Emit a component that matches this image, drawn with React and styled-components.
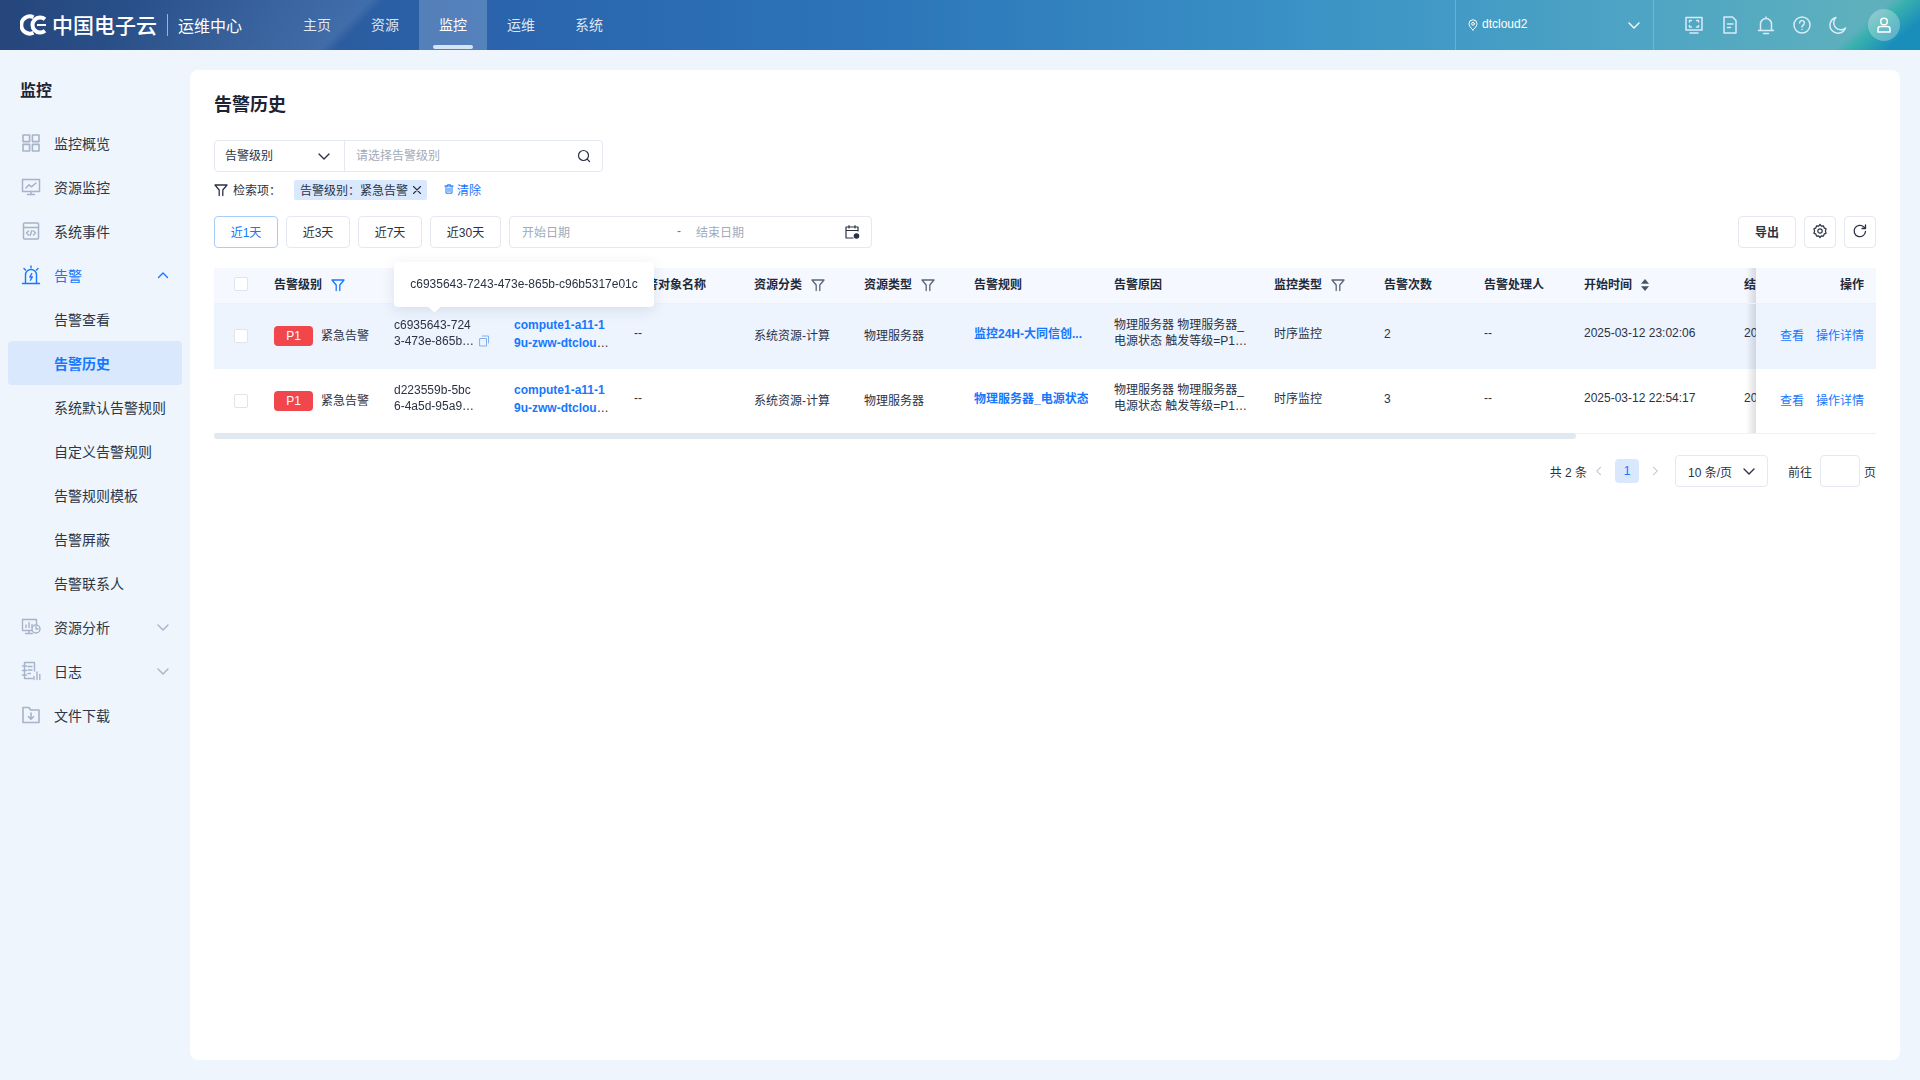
import React from 'react';
import styled, { createGlobalStyle } from 'styled-components';

const GlobalStyle = createGlobalStyle`
  html, body {
    margin: 0;
    padding: 0;
    background: #eef5fd;
    font-family: "Liberation Sans", "Noto Sans CJK SC", sans-serif;
    color: #2b3244;
  }
  * {
    box-sizing: border-box;
  }
`;

const Page = styled.div`
  width: 1920px;
  height: 1080px;
  overflow: hidden;
  display: flex;
  flex-direction: column;
`;

const TopBar = styled.header`
  flex: none;
  height: 50px;
  display: flex;
  align-items: stretch;
  padding-left: 20px;
  color: #fff;
  background:
    linear-gradient(140deg, transparent calc(100% - 56px), #38b0ae calc(100% - 46px), #1a8ebb calc(100% - 22px)),
    linear-gradient(135deg, rgba(255, 255, 255, 0) 100px, rgba(255, 255, 255, 0.1) 262px, rgba(255, 255, 255, 0) 272px),
    linear-gradient(90deg, #26467c 0, #2c5794 12%, #2a62ab 24%, #2c74b8 45%, #3a92c6 68%, #4da4c4 85%, #5eb0bd 97%);
`;

const Logo = styled.div`
  width: 263px;
  display: flex;
  align-items: center;
  svg {
    flex: none;
    margin-right: 4px;
  }
`;

const LogoName = styled.span`
  font-size: 21px;
  font-weight: 500;
  white-space: nowrap;
  margin-bottom: 2px;
`;

const LogoDivider = styled.span`
  width: 1px;
  height: 22px;
  margin: 0 10px;
  background: rgba(255, 255, 255, 0.55);
`;

const LogoSub = styled.span`
  font-size: 16px;
  white-space: nowrap;
`;

const NavItem = styled.a`
  position: relative;
  width: 68px;
  display: flex;
  align-items: center;
  justify-content: center;
  padding-bottom: 2px;
  font-size: 14px;
  color: ${(p) => (p.$active ? '#fff' : 'rgba(255,255,255,.85)')};
  background: ${(p) => (p.$active ? 'rgba(255,255,255,.2)' : 'transparent')};
  &::after {
    content: '';
    display: ${(p) => (p.$active ? 'block' : 'none')};
    position: absolute;
    left: 14px;
    right: 14px;
    bottom: 1px;
    height: 4px;
    border-radius: 2px;
    background: #d6e4f5;
  }
`;

const RegionSwitch = styled.div`
  margin-left: auto;
  width: 199px;
  display: flex;
  align-items: center;
  padding: 0 11px 0 11px;
  border-left: 1px solid rgba(255, 255, 255, 0.2);
  border-right: 1px solid rgba(255, 255, 255, 0.2);
  font-size: 12px;
  span {
    margin-left: 3px;
    margin-bottom: 2px;
    flex: 1;
  }
`;

const HeadTools = styled.div`
  display: flex;
  align-items: center;
  margin-left: 22px;
  padding-right: 20px;
`;

const HeadIcon = styled.span`
  width: 36px;
  height: 50px;
  display: flex;
  align-items: center;
  justify-content: center;
  color: #d8ecf8;
`;

const Avatar = styled.span`
  width: 32px;
  height: 32px;
  margin-left: 12px;
  border-radius: 50%;
  display: flex;
  align-items: center;
  justify-content: center;
  background: rgba(255, 255, 255, 0.28);
  color: #fff;
`;

const Body = styled.div`
  flex: 1;
  display: flex;
  min-height: 0;
`;

const Sidebar = styled.aside`
  flex: none;
  width: 190px;
  padding: 29px 8px 0;
`;

const SideTitle = styled.h2`
  margin: 0 0 18px;
  padding-left: 12px;
  font-size: 16px;
  line-height: 24px;
  font-weight: 700;
  color: #1d2433;
`;

const SideItem = styled.a`
  height: 44px;
  display: flex;
  align-items: center;
  padding-left: ${(p) => (p.$sub ? '46px' : '13px')};
  padding-right: 11px;
  font-size: 14px;
  border-radius: 4px;
  white-space: nowrap;
  color: ${(p) => (p.$active || p.$open ? '#1677ff' : '#2d3648')};
  font-weight: ${(p) => (p.$active ? 700 : 400)};
  background: ${(p) => (p.$active ? '#d9e8fd' : 'transparent')};
  > svg:first-child {
    flex: none;
    margin-right: 13px;
    color: ${(p) => (p.$open ? '#1677ff' : '#a7b3c8')};
  }
  > svg:last-child:not(:first-child) {
    margin-left: auto;
    color: ${(p) => (p.$open ? '#1677ff' : '#a7b3c8')};
  }
`;

const Main = styled.main`
  flex: 1;
  min-width: 0;
  padding: 20px 20px 20px 0;
`;

const Card = styled.section`
  height: 100%;
  background: #fff;
  border-radius: 8px;
  padding: 23px 24px 0;
`;

const PageTitle = styled.h1`
  margin: 0 0 23px;
  font-size: 18px;
  line-height: 24px;
  font-weight: 700;
  color: #1d2433;
`;

const SearchBox = styled.div`
  width: 389px;
  height: 32px;
  display: flex;
  align-items: center;
  border: 1px solid #e3e8f1;
  border-radius: 4px;
  font-size: 12px;
`;

const SearchType = styled.div`
  width: 130px;
  height: 100%;
  display: flex;
  align-items: center;
  justify-content: space-between;
  padding: 0 12px 3px 10px;
  border-right: 1px solid #e3e8f1;
  svg {
    margin-top: 3px;
  }
`;

const Placeholder = styled.span`
  flex: ${(p) => (p.$grow ? 1 : 'none')};
  color: #a2aaba;
  font-size: 12px;
  padding-bottom: 2px;
`;

const SearchInput = styled.div`
  flex: 1;
  display: flex;
  align-items: center;
  padding: 0 11px;
  ${Placeholder} {
    padding-bottom: 4px;
  }
`;

const CriteriaRow = styled.div`
  margin-top: 8px;
  height: 20px;
  display: flex;
  align-items: center;
  font-size: 12px;
  svg {
    flex: none;
  }
`;

const CriteriaLabel = styled.span`
  margin-left: 5px;
  width: 61px;
  padding-bottom: 2px;
`;

const CriteriaTag = styled.span`
  width: 133px;
  height: 20px;
  display: flex;
  align-items: center;
  justify-content: space-between;
  padding: 0 5px 2px 6px;
  background: #d9e8fd;
  border-radius: 2px;
  white-space: nowrap;
  svg {
    margin-top: 2px;
  }
`;

const ClearLink = styled.a`
  margin-left: 17px;
  display: flex;
  align-items: center;
  gap: 3px;
  padding-bottom: 2px;
  color: #1677ff;
`;

const ToolRow = styled.div`
  margin-top: 16px;
  display: flex;
  gap: 8px;
`;

const ToolButton = styled.button`
  height: 32px;
  width: ${(p) => p.$w || '64px'};
  padding: 0 0 2px;
  display: flex;
  align-items: center;
  justify-content: center;
  font: inherit;
  font-size: 12px;
  background: #fff;
  border-radius: 4px;
  border: 1px solid ${(p) => (p.$active ? '#a8ccfb' : '#e3e8f1')};
  color: ${(p) => (p.$active ? '#1677ff' : '#2b3244')};
  font-weight: ${(p) => (p.$strong ? 700 : 400)};
`;

const DateRange = styled.div`
  width: 363px;
  height: 32px;
  display: flex;
  align-items: center;
  padding: 0 11px 0 12px;
  border: 1px solid #e3e8f1;
  border-radius: 4px;
  font-size: 12px;
`;

const DateGap = styled.span`
  width: 126px;
  padding: 0 15px 2px 0;
  text-align: right;
  color: #6b7488;
`;

const RightTools = styled.div`
  margin-left: auto;
  display: flex;
  gap: 8px;
`;

const TableWrap = styled.div`
  position: relative;
  margin-top: 20px;
`;

const Scroller = styled.div`
  overflow: hidden;
  border-bottom: 1px solid #eef1f6;
`;

const Table = styled.table`
  width: 1830px;
  table-layout: fixed;
  border-collapse: collapse;
  font-size: 12px;
`;

const HeadRow = styled.tr`
  height: 35px;
  background: #f5f8fe;
  border-bottom: 1px solid #eef1f6;
`;

const Row = styled.tr`
  height: ${(p) => p.$h}px;
  background: ${(p) => (p.$hover ? '#edf4fe' : '#fff')};
`;

const Th = styled.th`
  padding: 0 10px 3px;
  text-align: left;
  font-weight: 700;
  white-space: nowrap;
  color: #222938;
`;

const ThInner = styled.span`
  display: flex;
  align-items: center;
  gap: ${(p) => p.$gap || 9}px;
  svg {
    margin-top: 2px;
  }
`;

const Td = styled.td`
  padding: 0 10px ${(p) => p.$lift || 0}px;
  vertical-align: middle;
  line-height: ${(p) => p.$lh || 16}px;
  white-space: ${(p) => (p.$wrap ? 'normal' : 'nowrap')};
`;

const Clamp = styled.div`
  width: ${(p) => p.$w}px;
  display: -webkit-box;
  -webkit-box-orient: vertical;
  -webkit-line-clamp: 2;
  overflow: hidden;
  word-break: break-all;
`;

const IdCell = styled.div`
  position: relative;
  svg {
    position: absolute;
    left: 84px;
    top: 18px;
    color: #7fb0f5;
  }
`;

const Link = styled.a`
  color: #1677ff;
  font-weight: ${(p) => (p.$bold ? 700 : 400)};
`;

const Level = styled.div`
  display: flex;
  align-items: center;
  gap: 8px;
  padding-bottom: 1px;
`;

const LevelBadge = styled.span`
  width: 39px;
  height: 20px;
  display: flex;
  align-items: center;
  justify-content: center;
  border-radius: 4px;
  background: #f0464c;
  color: #fff;
  font-size: 12px;
`;

const CheckBox = styled.span`
  display: block;
  width: 14px;
  height: 14px;
  margin-left: 10px;
  background: #fff;
  border: 1px solid #dfe5ee;
  border-radius: 2px;
`;

const stickyCell = `
  position: sticky;
  right: 0;
  background: inherit;
  text-align: right;
  padding-right: 12px;
  &::before {
    content: '';
    position: absolute;
    left: -10px;
    top: 0;
    bottom: 0;
    width: 10px;
    background: linear-gradient(to left, rgba(60, 60, 70, 0.16), rgba(60, 60, 70, 0));
  }
`;

const FixedTh = styled(Th)`
  ${stickyCell}
`;

const FixedTd = styled(Td)`
  ${stickyCell}
  ${Link} + ${Link} {
    margin-left: 12px;
  }
`;

const ScrollThumb = styled.div`
  width: 1362px;
  height: 6px;
  margin-top: -1px;
  border-radius: 3px;
  background: #e2e8f0;
`;

const Tooltip = styled.div`
  position: absolute;
  left: 180px;
  top: -6px;
  width: 260px;
  height: 45px;
  display: flex;
  align-items: center;
  justify-content: center;
  padding-bottom: 2px;
  background: #fff;
  border-radius: 4px;
  box-shadow: 0 3px 14px rgba(40, 60, 100, 0.12);
  font-size: 12px;
  white-space: nowrap;
  &::after {
    content: '';
    position: absolute;
    left: 36px;
    bottom: -4px;
    width: 9px;
    height: 9px;
    background: #fff;
    transform: rotate(45deg);
  }
`;

const Pager = styled.div`
  margin-top: 16px;
  display: flex;
  align-items: center;
  justify-content: flex-end;
  height: 32px;
  font-size: 12px;
`;

const PagerArrow = styled.span`
  display: flex;
  width: 24px;
  justify-content: center;
  color: #b6bfce;
`;

const PageNum = styled.span`
  width: 24px;
  height: 24px;
  margin: 0 4px;
  display: flex;
  align-items: center;
  justify-content: center;
  border-radius: 4px;
  background: #d9e8fd;
  color: #1677ff;
`;

const SizeSelect = styled.div`
  width: 93px;
  height: 32px;
  margin-left: 8px;
  display: flex;
  align-items: center;
  justify-content: space-between;
  padding: 0 10px 0 12px;
  border: 1px solid #e3e8f1;
  border-radius: 4px;
`;

const JumpLabel = styled.span`
  margin-left: 20px;
`;

const JumpInput = styled.div`
  width: 40px;
  height: 32px;
  margin: 0 4px 0 8px;
  border: 1px solid #e3e8f1;
  border-radius: 4px;
`;

// icons
const Svg = ({ size = 20, vb = 20, sw = 1.5, children, ...rest }) => (
  <svg width={size} height={size} viewBox={`0 0 ${vb} ${vb}`} fill="none" stroke="currentColor" strokeWidth={sw} strokeLinecap="round" strokeLinejoin="round" {...rest}>
    {children}
  </svg>
);

const chevronPaths = {
  up: 'M3.5 10.5 8 6l4.500 4.500',
  down: 'M3 6l5 5 5-5',
  left: 'M10 3 5 8l5 5',
  right: 'M6 3l5 5-5 5',
};

const Chevron = ({ size = 16, dir = 'down', sw = 1.4 }) => (
  <Svg size={size} vb={16} sw={sw}>
    <path d={chevronPaths[dir]} />
  </Svg>
);

const Funnel = ({ color = '#5b6579', size = 14 }) => (
  <Svg size={size} vb={14} sw={1.3} style={{ color }}>
    <path d="M1 2h12L8.800 7v5.500M1 2l4.200 5v5.500" />
  </Svg>
);

const LogoMark = () => (
  <svg width="28" height="24" viewBox="0 0 28 24" fill="none" stroke="#fff">
    <path d="M13.500 4.200A8.600 8.600 0 1 0 13.500 19.800" strokeWidth="4" />
    <path d="M25 6.200A7.600 7.600 0 1 0 25 17.800" strokeWidth="4" />
    <path d="M17 12h9" strokeWidth="2" />
  </svg>
);

const icons = {
  grid: (
    <Svg size={20} sw={1.6}>
      <rect x="2" y="2" width="6.600" height="6.600" />
      <rect x="11.400" y="2" width="6.600" height="6.600" />
      <rect x="2" y="11.400" width="6.600" height="6.600" />
      <rect x="11.400" y="11.400" width="6.600" height="6.600" />
    </Svg>
  ),
  chart: (
    <Svg size={20} sw={1.5}>
      <rect x="1.500" y="2.500" width="17" height="12" />
      <path d="M5 11l3-3.200 2.400 2L15 6M10 14.500v3M6.500 17.500h7" />
    </Svg>
  ),
  code: (
    <Svg size={20} sw={1.5}>
      <rect x="2.500" y="2" width="15" height="16" rx="1" />
      <path d="M2.500 6.500h15M7.500 10l-2 2 2 2M12.500 10l2 2-2 2M10.800 9.800l-1.600 4.400" />
    </Svg>
  ),
  alarm: (
    <Svg size={20} sw={1.4}>
      <path d="M1.500 18.500h17M4.500 18.500V10a5.500 5.500 0 0 1 11 0v8.500M10.800 8.500 8.800 12h2.600l-2 3.200M10 1v1.800M3 3.500l1.500 1.500M17 3.500 15.500 5" />
    </Svg>
  ),
  analysis: (
    <Svg size={20} sw={1.4}>
      <path d="M11 13.500H1.500v-11h14V7M8 13.500v3M4.500 16.500h7M5 10.500V8M8 10.500V5.500M11 10.500V7.500" />
      <circle cx="15" cy="12" r="4" />
      <path d="M15 9.800V12h2" />
    </Svg>
  ),
  log: (
    <Svg size={20} sw={1.4}>
      <path d="M13.500 10V1.500h-10v16h8M1.500 5h4M1.500 9.500h4M1.500 14h4M7 5.500h4M7 9h4M7 12.500h2.500M13 18.500v-3M16 18.500V11M18.800 18.500v-5" />
    </Svg>
  ),
  folder: (
    <Svg size={20} sw={1.6}>
      <path d="M2 2.500h6l1.600 2.500H18v12.500H2zM10 8v6M7.500 11.700 10 14.200l2.500-2.500" />
    </Svg>
  ),
  screen: (
    <Svg size={20} sw={1.5}>
      <rect x="2" y="2.500" width="16" height="12.500" />
      <path d="M6 18h8M5.500 7V5.500H7.500M12.500 5.500h2V7M14.500 10.500V12h-2M7.500 12h-2v-1.500" />
    </Svg>
  ),
  doc: (
    <Svg size={20} sw={1.5}>
      <path d="M4 2h8.500L16 5.500V18H4zM7.500 9h5.500M7.500 12.500h3" />
    </Svg>
  ),
  bell: (
    <Svg size={20} sw={1.5}>
      <path d="M2.500 15.500h15M4.500 15.500V9a5.500 5.500 0 0 1 11 0v6.500M10 2v1.500M7.500 18.500h5" />
    </Svg>
  ),
  help: (
    <Svg size={20} sw={1.5}>
      <circle cx="10" cy="10" r="8" />
      <path d="M7.600 8a2.400 2.400 0 1 1 3.700 2c-.8.500-1.300 1-1.300 2M10 14.500v.1" />
    </Svg>
  ),
  moon: (
    <Svg size={20} sw={1.5}>
      <path d="M8 2.500a8 8 0 1 0 9.500 10.500A7 7 0 0 1 8 2.500z" />
    </Svg>
  ),
  user: (
    <Svg size={20} sw={1.5}>
      <circle cx="10" cy="6.500" r="3.300" />
      <path d="M4 17v-3a2.500 2.500 0 0 1 2.500-2.500h7A2.500 2.500 0 0 1 16 14v3zM4 17h12" />
    </Svg>
  ),
};

const navItems = ['主页', '资源', '监控', '运维', '系统'];

const columns = [50, 120, 120, 120, 120, 110, 110, 140, 160, 110, 100, 100, 160, 190, 120];

const alerts = [
  {
    id: 'c6935643-7243-473e-865b-c96b5317e01c',
    rule: '监控24H-大同信创...',
    count: 2,
    start: '2025-03-12 23:02:06',
    end: '2025-03-12 23:12:06',
    h: 66,
    hover: true,
  },
  {
    id: 'd223559b-5bc6-4a5d-95a9-1f0c7d2e8a44',
    rule: '物理服务器_电源状态',
    count: 3,
    start: '2025-03-12 22:54:17',
    end: '2025-03-12 23:04:17',
    h: 64,
  },
];

const HeadFilter = ({ children, active }) => (
  <ThInner>
    {children}
    <Funnel color={active ? '#1677ff' : '#5b6579'} />
  </ThInner>
);

export default function App() {
  return (
    <>
      <GlobalStyle />
      <Page>
        <TopBar>
          <Logo>
            <LogoMark />
            <LogoName>中国电子云</LogoName>
            <LogoDivider />
            <LogoSub>运维中心</LogoSub>
          </Logo>
          {navItems.map((n) => (
            <NavItem key={n} $active={n === '监控'}>
              {n}
            </NavItem>
          ))}
          <RegionSwitch>
            <Svg size={12} vb={12} sw={1}>
              <path d="M6 11S2 7.500 2 4.800a4 4 0 0 1 8 0C10 7.500 6 11 6 11z" />
              <circle cx="6" cy="4.800" r="1.400" />
            </Svg>
            <span>dtcloud2</span>
            <Chevron />
          </RegionSwitch>
          <HeadTools>
            <HeadIcon>{icons.screen}</HeadIcon>
            <HeadIcon>{icons.doc}</HeadIcon>
            <HeadIcon>{icons.bell}</HeadIcon>
            <HeadIcon>{icons.help}</HeadIcon>
            <HeadIcon>{icons.moon}</HeadIcon>
            <Avatar>{icons.user}</Avatar>
          </HeadTools>
        </TopBar>
        <Body>
          <Sidebar>
            <SideTitle>监控</SideTitle>
            <SideItem>{icons.grid}监控概览</SideItem>
            <SideItem>{icons.chart}资源监控</SideItem>
            <SideItem>{icons.code}系统事件</SideItem>
            <SideItem $open>
              {icons.alarm}告警
              <Chevron dir="up" />
            </SideItem>
            <SideItem $sub>告警查看</SideItem>
            <SideItem $sub $active>
              告警历史
            </SideItem>
            <SideItem $sub>系统默认告警规则</SideItem>
            <SideItem $sub>自定义告警规则</SideItem>
            <SideItem $sub>告警规则模板</SideItem>
            <SideItem $sub>告警屏蔽</SideItem>
            <SideItem $sub>告警联系人</SideItem>
            <SideItem>
              {icons.analysis}资源分析
              <Chevron />
            </SideItem>
            <SideItem>
              {icons.log}日志
              <Chevron />
            </SideItem>
            <SideItem>{icons.folder}文件下载</SideItem>
          </Sidebar>
          <Main>
            <Card>
              <PageTitle>告警历史</PageTitle>
              <SearchBox>
                <SearchType>
                  告警级别
                  <Chevron />
                </SearchType>
                <SearchInput>
                  <Placeholder $grow>请选择告警级别</Placeholder>
                  <Svg size={14} vb={14} sw={1.2}>
                    <circle cx="6.500" cy="6.500" r="5" />
                    <path d="M10.200 10.200 12.500 12.500" />
                  </Svg>
                </SearchInput>
              </SearchBox>
              <CriteriaRow>
                <Funnel color="#2b3244" />
                <CriteriaLabel>检索项：</CriteriaLabel>
                <CriteriaTag>
                  告警级别：紧急告警
                  <Svg size={10} vb={10} sw={1.1}>
                    <path d="M1.500 1.500l7 7M8.500 1.500l-7 7" />
                  </Svg>
                </CriteriaTag>
                <ClearLink>
                  <Svg size={10} vb={10} sw={1}>
                    <path d="M.8 2h8.400M3.500 2V.8h3V2M2 2v7.200h6V2M4 4v3.500M6 4v3.500" />
                  </Svg>
                  清除
                </ClearLink>
              </CriteriaRow>
              <ToolRow>
                <ToolButton $active>近1天</ToolButton>
                <ToolButton>近3天</ToolButton>
                <ToolButton>近7天</ToolButton>
                <ToolButton $w="71px">近30天</ToolButton>
                <DateRange>
                  <Placeholder>开始日期</Placeholder>
                  <DateGap>-</DateGap>
                  <Placeholder $grow>结束日期</Placeholder>
                  <Svg size={16} vb={16} sw={1.2}>
                    <path d="M14 7V3H2v11h7M2 6.500h12M5 1.500V4M11 1.500V4" />
                    <circle cx="12.500" cy="12" r="2.200" fill="currentColor" />
                  </Svg>
                </DateRange>
                <RightTools>
                  <ToolButton $w="58px" $strong>
                    导出
                  </ToolButton>
                  <ToolButton $w="32px">
                    <Svg size={16} vb={16} sw={1.2}>
                      <path d="M8 1.300l1.300 1.800 2.200-.3.600 2.100 2 1-.7 2.100.7 2.100-2 1-.6 2.100-2.200-.3L8 14.700l-1.300-1.800-2.200.3-.6-2.100-2-1 .7-2.100-.7-2.100 2-1 .6-2.100 2.200.3z" />
                      <circle cx="8" cy="8" r="2.200" />
                    </Svg>
                  </ToolButton>
                  <ToolButton $w="32px">
                    <Svg size={16} vb={16} sw={1.3}>
                      <path d="M13.500 8.500A5.700 5.700 0 1 1 11.800 3.900L13.500 5.500M13.500 2v3.500H10" />
                    </Svg>
                  </ToolButton>
                </RightTools>
              </ToolRow>
              <TableWrap>
                <Scroller>
                  <Table>
                    <colgroup>
                      {columns.map((w, i) => (
                        <col key={i} width={w} />
                      ))}
                    </colgroup>
                    <thead>
                      <HeadRow>
                        <Th>
                          <CheckBox />
                        </Th>
                        <Th>
                          <HeadFilter active>告警级别</HeadFilter>
                        </Th>
                        <Th>告警ID</Th>
                        <Th>告警对象</Th>
                        <Th>告警对象名称</Th>
                        <Th>
                          <HeadFilter>资源分类</HeadFilter>
                        </Th>
                        <Th>
                          <HeadFilter>资源类型</HeadFilter>
                        </Th>
                        <Th>告警规则</Th>
                        <Th>告警原因</Th>
                        <Th>
                          <HeadFilter>监控类型</HeadFilter>
                        </Th>
                        <Th>告警次数</Th>
                        <Th>告警处理人</Th>
                        <Th>
                          <ThInner $gap={8}>
                            开始时间
                            <svg width="10" height="12" viewBox="0 0 10 12" fill="#4a5468">
                              <path d="M5 0l4 4.800H1zM5 12 1 7.200h8z" />
                            </svg>
                          </ThInner>
                        </Th>
                        <Th>结束时间</Th>
                        <FixedTh>操作</FixedTh>
                      </HeadRow>
                    </thead>
                    <tbody>
                      {alerts.map((a) => (
                        <Row key={a.id} $h={a.h} $hover={a.hover}>
                          <Td>
                            <CheckBox />
                          </Td>
                          <Td>
                            <Level>
                              <LevelBadge>P1</LevelBadge>
                              紧急告警
                            </Level>
                          </Td>
                          <Td $wrap $lift={6}>
                            <IdCell>
                              <Clamp $w={83}>{a.id}</Clamp>
                              {a.hover && (
                                <Svg size={12} vb={12} sw={1}>
                                  <path d="M2 3.500h6.500V11H2zM4.500 1h6v7" />
                                </Svg>
                              )}
                            </IdCell>
                          </Td>
                          <Td $wrap $lift={4} $lh={18}>
                            <Clamp $w={95}>
                              <Link $bold>compute1-a11-19u-zww-dtcloud2-node-0031</Link>
                            </Clamp>
                          </Td>
                          <Td $lift={6}>--</Td>
                          <Td>系统资源-计算</Td>
                          <Td>物理服务器</Td>
                          <Td $lift={4}>
                            <Clamp $w={114}>
                              <Link $bold>{a.rule}</Link>
                            </Clamp>
                          </Td>
                          <Td $wrap $lift={6}>
                            <Clamp $w={136}>物理服务器 物理服务器_电源状态 触发等级=P1 当前值=0 持续时间</Clamp>
                          </Td>
                          <Td $lift={5}>时序监控</Td>
                          <Td $lift={5}>{a.count}</Td>
                          <Td $lift={6}>--</Td>
                          <Td $lift={6}>{a.start}</Td>
                          <Td $lift={6}>{a.end}</Td>
                          <FixedTd>
                            <Link>查看</Link>
                            <Link>操作详情</Link>
                          </FixedTd>
                        </Row>
                      ))}
                    </tbody>
                  </Table>
                </Scroller>
                <ScrollThumb />
                <Tooltip>c6935643-7243-473e-865b-c96b5317e01c</Tooltip>
              </TableWrap>
              <Pager>
                共 2 条
                <PagerArrow>
                  <Chevron size={12} dir="left" />
                </PagerArrow>
                <PageNum>1</PageNum>
                <PagerArrow>
                  <Chevron size={12} dir="right" />
                </PagerArrow>
                <SizeSelect>
                  10 条/页
                  <Chevron />
                </SizeSelect>
                <JumpLabel>前往</JumpLabel>
                <JumpInput />页
              </Pager>
            </Card>
          </Main>
        </Body>
      </Page>
    </>
  );
}
